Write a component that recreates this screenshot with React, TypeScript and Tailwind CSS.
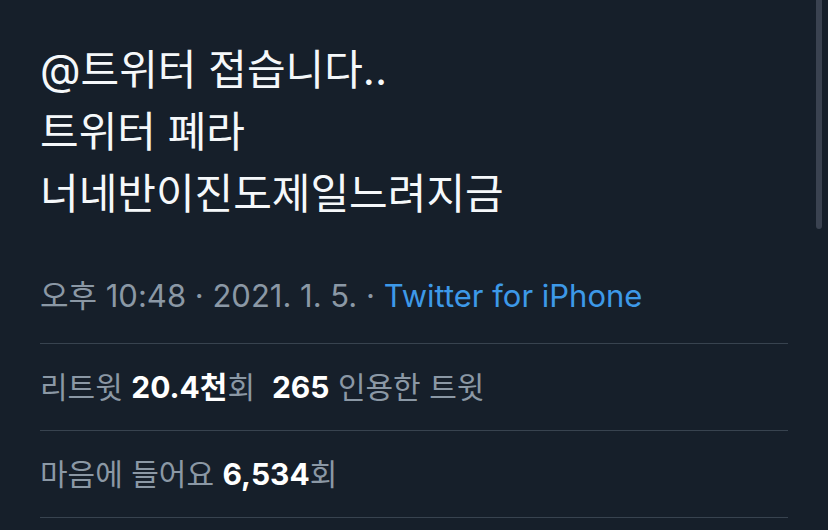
export default function App() {
  const font = { fontFamily: 'Inter, "Noto Sans CJK KR", sans-serif' }
  return (
    <div className="relative w-[828px] h-[530px] overflow-hidden bg-[#161f2a]" style={font}>
      <main className="px-[40px] pt-[39px]">
        <div className="text-[42px] leading-[62px] text-[#f5f8fa]">
          <p>@트위터 접습니다..</p>
          <p>트위터 폐라</p>
          <p>너네반이진도제일느려지금</p>
        </div>

        <div className="mt-[54px] pb-[30px] text-[31px] leading-[34px] text-[#8b98a5] border-b border-[#38434f]">
          오후 10:48 · 2021. 1. 5. · <span className="text-[#3d99e8]">Twitter for iPhone</span>
        </div>

        <StatRow>
          리트윗 <b className="font-bold text-white">20.4천</b>회&nbsp;&nbsp;<b className="font-bold text-white">265</b> 인용한 트윗
        </StatRow>
        <StatRow>
          마음에 들어요 <b className="font-bold text-white">6,534</b>회
        </StatRow>
      </main>

      {/* scrollbar thumb */}
      <div className="absolute right-[6px] top-0 w-[6px] h-[229px] rounded-b-full bg-[#3a4250]" />
    </div>
  )
}

function StatRow({ children }: { children: React.ReactNode }) {
  return (
    <div className="py-[26px] text-[30px] leading-[34px] text-[#8b98a5] border-b border-[#38434f]">
      {children}
    </div>
  )
}
